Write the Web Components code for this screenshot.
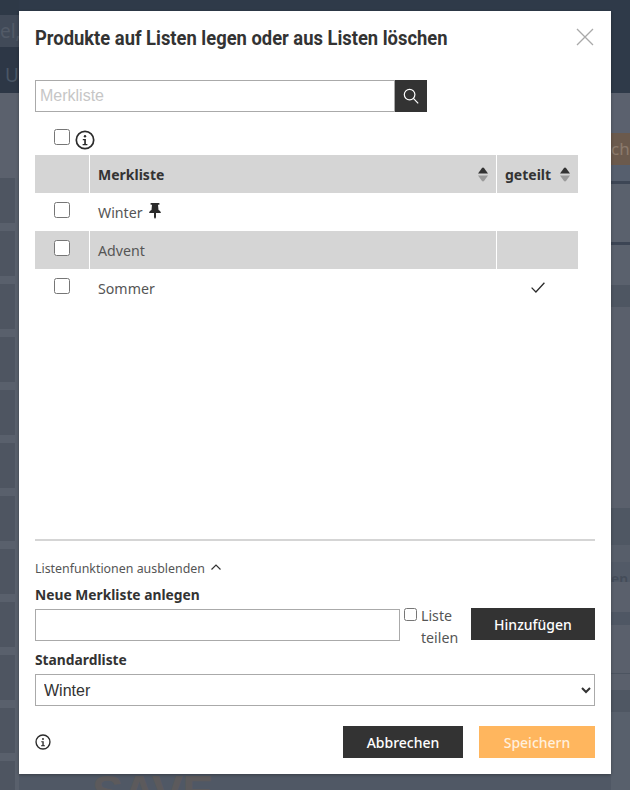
<!DOCTYPE html>
<html lang="de">
<head>
<meta charset="utf-8">
<title>Merkliste</title>
<style>
    html, body { margin: 0; padding: 0; height: 100%; }
    body { width: 630px; height: 790px; overflow: hidden; position: relative; font-family: 'Noto Sans', sans-serif; }
</style>
</head>
<body>
<page-backdrop></page-backdrop>
<list-modal heading="Produkte auf Listen legen oder aus Listen löschen"></list-modal>

<script>
const icons = {
    info: `<svg viewBox="0 0 20 20" width="100%" height="100%"><circle cx="10" cy="10" r="8.7" fill="none" stroke="#2b2b2b" stroke-width="1.7"/><circle cx="10" cy="6.2" r="1.2" fill="#2b2b2b"/><path d="M7.8 9h3.1v5h1.5v1.3H7.6V14h1.6v-3.7H7.8z" fill="#2b2b2b"/></svg>`,
    search: `<svg viewBox="0 0 16 16" width="16" height="16" fill="none" stroke="#fff" stroke-width="1.2"><circle cx="6.6" cy="6.6" r="5.3"/><path d="M10.4 10.4L15.2 15.4"/></svg>`,
    close: `<svg viewBox="0 0 18 18" width="18" height="18" fill="none" stroke="#a9a9a9" stroke-width="1.3"><path d="M1 1l16 16M17 1L1 17"/></svg>`,
    pin: `<svg viewBox="0 0 12 16" width="12" height="16" fill="#2b2b2b"><path d="M1.6 0h8.8v1.7H9l.5 5.2c1.4.6 2.3 1.6 2.4 3H7v4.4L6 16l-1-1.7V9.9H.1c.1-1.4 1-2.4 2.4-3L3 1.7H1.6z"/></svg>`,
    check: `<svg viewBox="0 0 14 11" width="14" height="11" fill="none" stroke="#2b2b2b" stroke-width="1.3"><path d="M.6 5.6l4.3 4.4L13.4.7"/></svg>`,
    chevron: `<svg viewBox="0 0 10 6" width="10" height="6" fill="none" stroke="#333" stroke-width="1.2"><path d="M.5 5.5L5 1l4.5 4.5"/></svg>`,
    sort: `<svg viewBox="0 0 10 15" width="10" height="15"><path d="M5 .5c.4 0 .7.2 1 .5l4 5.5H0L4 1c.3-.3.6-.5 1-.5z" fill="#333"/><path d="M0 8.5h10L6 14c-.3.3-.6.5-1 .5s-.7-.2-1-.5z" fill="#9b9b9b"/></svg>`
};

// blurred shop page behind the dialog, only the edges show
class PageBackdrop extends HTMLElement {
    constructor() {
        super();
        this.attachShadow({ mode: 'open' });
    }

    connectedCallback() {
        const strip = (bands) => bands.map(([h, c, t]) =>
            `<div class="band" style="height:${h}px;background:${c}">${t || ''}</div>`).join('');

        const blocks = [];
        for (let i = 0; i < 12; i++) {
            blocks.push([45, '#4e5561'], [8, '#59606c']);
        }

        this.shadowRoot.innerHTML = `
            <style>
                :host {
                    display: flex;
                    width: 630px;
                    height: 790px;
                    font-family: 'Noto Sans', sans-serif;
                    color: #4b5361;
                }
                .side { flex: none; width: 19px; height: 790px; overflow: hidden; }
                .mid {
                    flex: 1;
                    min-width: 0;
                    display: flex;
                    flex-direction: column;
                    justify-content: space-between;
                    background: #505865;
                }
                .band {
                    font-size: 16px;
                    line-height: 32px;
                    white-space: nowrap;
                    overflow: hidden;
                }
                .blocks { background: #59606c; }
                .blocks .band { width: 15px; }
                .top { height: 93px; background: #2f3a49; }
                .logo {
                    height: 16px;
                    overflow: hidden;
                    margin-left: 73px;
                    font: bold 47px/36px 'Liberation Sans', sans-serif;
                    color: #5c5a5c;
                    letter-spacing: -1px;
                }
            </style>
            <div class="side left">
                ${strip([
                    [15, '#2e3947'],
                    [32, '#414a58', '<span style="color:#525a67;font-size:19px">el,</span>'],
                    [46, '#2d3746', '<span style="color:#4a5665;font-size:19px;line-height:56px;margin-left:5px">Ur</span>'],
                    [85, '#5b616d']
                ])}
                <div class="blocks">${strip(blocks)}</div>
            </div>
            <div class="mid">
                <div class="top"></div>
                <div class="logo">SAVE</div>
            </div>
            <div class="side right">
                ${strip([
                    [93, '#2f3a49'], [40, '#5b616e'],
                    [32, '#6b5a4d', '<span style="color:#8b7a6c;font-size:17px">ch</span>'],
                    [16, '#565f6e'], [3, '#3d4655'], [58, '#5a616d'], [3, '#3c4554'], [40, '#5a616d'],
                    [22, '#4e5662'], [201, '#5a606c'], [37, '#4f5763'], [17, '#575e6a'],
                    [20, '#525a67', '<span style="color:#444c59;font-size:14px;font-weight:600;line-height:26px">en</span>'],
                    [30, '#5a606c'], [13, '#4f5764'], [48, '#5a606c'], [1, '#4c5460'], [16, '#5a606c'],
                    [22, '#4f5763'], [78, '#58606c']
                ])}
            </div>
        `;
    }
}

class InfoIcon extends HTMLElement {
    constructor() {
        super();
        this.attachShadow({ mode: 'open' });
    }

    connectedCallback() {
        const size = this.getAttribute('size') || 20;
        this.shadowRoot.innerHTML = `
            <style>
                :host { display: block; flex: none; width: ${size}px; height: ${size}px; }
            </style>
            ${icons.info}
        `;
    }
}

class ActionButton extends HTMLElement {
    constructor() {
        super();
        this.attachShadow({ mode: 'open' });
    }

    connectedCallback() {
        const primary = this.hasAttribute('primary');
        this.shadowRoot.innerHTML = `
            <style>
                :host {
                    display: flex;
                    flex: none;
                    align-items: center;
                    justify-content: center;
                    height: 32px;
                    width: ${this.getAttribute('width') || 120}px;
                    background: ${primary ? '#ffb65e' : '#333'};
                    color: ${primary ? '#fff0dd' : '#fff'};
                    font: 500 14px 'Noto Sans', sans-serif;
                }
            </style>
            <slot></slot>
        `;
    }
}

class SearchBox extends HTMLElement {
    constructor() {
        super();
        this.attachShadow({ mode: 'open' });
    }

    connectedCallback() {
        this.shadowRoot.innerHTML = `
            <style>
                :host { display: flex; width: 392px; height: 32px; }
                input {
                    flex: 1;
                    min-width: 0;
                    box-sizing: border-box;
                    height: 32px;
                    margin: 0;
                    padding: 0 4px;
                    border: 1px solid #aaa;
                    border-radius: 0;
                    outline: none;
                    font: 16px 'Liberation Sans', sans-serif;
                }
                input::placeholder { color: #c6c6c6; opacity: 1; }
                button {
                    display: flex;
                    align-items: center;
                    justify-content: center;
                    width: 32px;
                    padding: 0;
                    border: 0;
                    background: #333;
                }
            </style>
            <input type="text" placeholder="Merkliste">
            <button type="button" aria-label="Suchen">${icons.search}</button>
        `;
    }
}

class ListTable extends HTMLElement {
    constructor() {
        super();
        this.attachShadow({ mode: 'open' });
    }

    connectedCallback() {
        const rows = [
            { name: 'Winter', pinned: true },
            { name: 'Advent', stripe: true },
            { name: 'Sommer', shared: true }
        ];

        this.shadowRoot.innerHTML = `
            <style>
                :host {
                    display: grid;
                    grid-template-columns: 54px 407px 82px;
                    grid-auto-rows: 38px;
                    width: 543px;
                    font: 14.2px 'Noto Sans', sans-serif;
                    color: #555;
                }
                .cell {
                    display: flex;
                    align-items: center;
                    box-sizing: border-box;
                    padding-left: 8px;
                    border-left: 1px solid #fff;
                }
                .cell.box { padding: 9px 0 0 19px; border-left: 0; align-items: flex-start; }
                .cell.shared { padding: 0 0 1px 0; justify-content: center; }
                .grey { background: #d5d5d5; }
                .head {
                    justify-content: space-between;
                    font-size: 14px;
                    font-weight: 700;
                    color: #333;
                    padding-right: 8px;
                }
                .head svg { display: block; }
                .name svg { margin-left: 6px; margin-top: -3px; }
                input {
                    width: 16px;
                    height: 16px;
                    margin: 0;
                    background: #fff;
                }
            </style>
            <div class="cell box grey"></div>
            <div class="cell head grey">Merkliste ${icons.sort}</div>
            <div class="cell head grey">geteilt ${icons.sort}</div>
            ${rows.map(r => `
                <div class="cell box ${r.stripe ? 'grey' : ''}"><input type="checkbox" aria-label="${r.name}"></div>
                <div class="cell name ${r.stripe ? 'grey' : ''}">${r.name}${r.pinned ? icons.pin : ''}</div>
                <div class="cell shared ${r.stripe ? 'grey' : ''}">${r.shared ? icons.check : ''}</div>
            `).join('')}
        `;
    }
}

class ListFunctions extends HTMLElement {
    constructor() {
        super();
        this.attachShadow({ mode: 'open' });
    }

    connectedCallback() {
        this.shadowRoot.innerHTML = `
            <style>
                :host {
                    display: block;
                    font: 14.2px 'Noto Sans', sans-serif;
                    color: #555;
                }
                .toggle {
                    display: flex;
                    align-items: center;
                    gap: 6px;
                    height: 20px;
                    font-size: 12.4px;
                }
                .toggle svg { margin-bottom: 3px; }
                label.title {
                    display: block;
                    font-size: 13.8px;
                    font-weight: 700;
                    color: #333;
                    line-height: 20px;
                }
                .add { display: flex; margin-top: 3px; height: 48px; }
                .field {
                    flex: none;
                    box-sizing: border-box;
                    width: 365px;
                    height: 32px;
                    margin: 1px 0 0;
                    border: 1px solid #aaa;
                    border-radius: 0;
                }
                .share {
                    flex: none;
                    width: 67px;
                    display: flex;
                    align-items: flex-start;
                    line-height: 22px;
                    margin-left: 4px;
                    margin-top: -3px;
                }
                .share input { flex: none; width: 13px; height: 13px; margin: 3px 4px 0 0; }
                select {
                    display: block;
                    box-sizing: border-box;
                    width: 100%;
                    height: 32px;
                    margin: 4px 0 0;
                    padding: 0 4px;
                    border: 1px solid #aaa;
                    border-radius: 0;
                    background: #fff;
                    color: #333;
                    font: 16px 'Liberation Sans', sans-serif;
                }
            </style>
            <div class="toggle">Listenfunktionen ausblenden ${icons.chevron}</div>
            <label class="title" style="margin-top:7px">Neue Merkliste anlegen</label>
            <div class="add">
                <input class="field" type="text" aria-label="Neue Merkliste anlegen">
                <label class="share"><input type="checkbox"><span>Liste teilen</span></label>
                <action-button width="124">Hinzufügen</action-button>
            </div>
            <label class="title" style="margin-top:-6px">Standardliste</label>
            <select aria-label="Standardliste"><option>Winter</option><option>Advent</option><option>Sommer</option></select>
        `;
    }
}

class ListModal extends HTMLElement {
    constructor() {
        super();
        this.attachShadow({ mode: 'open' });
    }

    connectedCallback() {
        this.shadowRoot.innerHTML = `
            <style>
                :host {
                    position: absolute;
                    left: 19px;
                    top: 11px;
                    width: 592px;
                    height: 763px;
                    box-sizing: border-box;
                    padding: 16px;
                    display: flex;
                    flex-direction: column;
                    background: #fff;
                    box-shadow: 0 1px 3px rgba(0,0,0,.3);
                }
                header {
                    display: flex;
                    align-items: center;
                    justify-content: space-between;
                    height: 22px;
                    margin-bottom: 31px;
                }
                h1 {
                    margin: 0;
                    font: bold 21px Roboto, 'Liberation Sans', sans-serif;
                    color: #333;
                    white-space: nowrap;
                    transform: scaleX(.875);
                    transform-origin: left center;
                }
                header svg { display: block; margin: 0 1px 2px 0; }
                .tools {
                    display: flex;
                    align-items: flex-start;
                    gap: 5px;
                    height: 26px;
                    margin: 17px 0 0 19px;
                }
                .tools input { width: 16px; height: 16px; margin: 0; }
                .tools info-icon { margin-top: 1px; }
                .body { flex: 1; min-height: 0; }
                hr {
                    height: 2px;
                    margin: 0 0 17px;
                    border: 0;
                    background: #d5d5d5;
                }
                footer {
                    display: flex;
                    align-items: center;
                    gap: 16px;
                    margin-top: 20px;
                }
                footer info-icon { margin-right: auto; margin-bottom: 3px; }
            </style>
            <header>
                <h1>${this.getAttribute('heading')}</h1>
                ${icons.close}
            </header>
            <search-box></search-box>
            <div class="tools">
                <input type="checkbox" aria-label="Alle auswählen">
                <info-icon size="20"></info-icon>
            </div>
            <div class="body"><list-table></list-table></div>
            <hr>
            <list-functions></list-functions>
            <footer>
                <info-icon size="16"></info-icon>
                <action-button width="120">Abbrechen</action-button>
                <action-button width="116" primary>Speichern</action-button>
            </footer>
        `;
    }
}

customElements.define('page-backdrop', PageBackdrop);
customElements.define('info-icon', InfoIcon);
customElements.define('action-button', ActionButton);
customElements.define('search-box', SearchBox);
customElements.define('list-table', ListTable);
customElements.define('list-functions', ListFunctions);
customElements.define('list-modal', ListModal);
</script>
</body>
</html>
